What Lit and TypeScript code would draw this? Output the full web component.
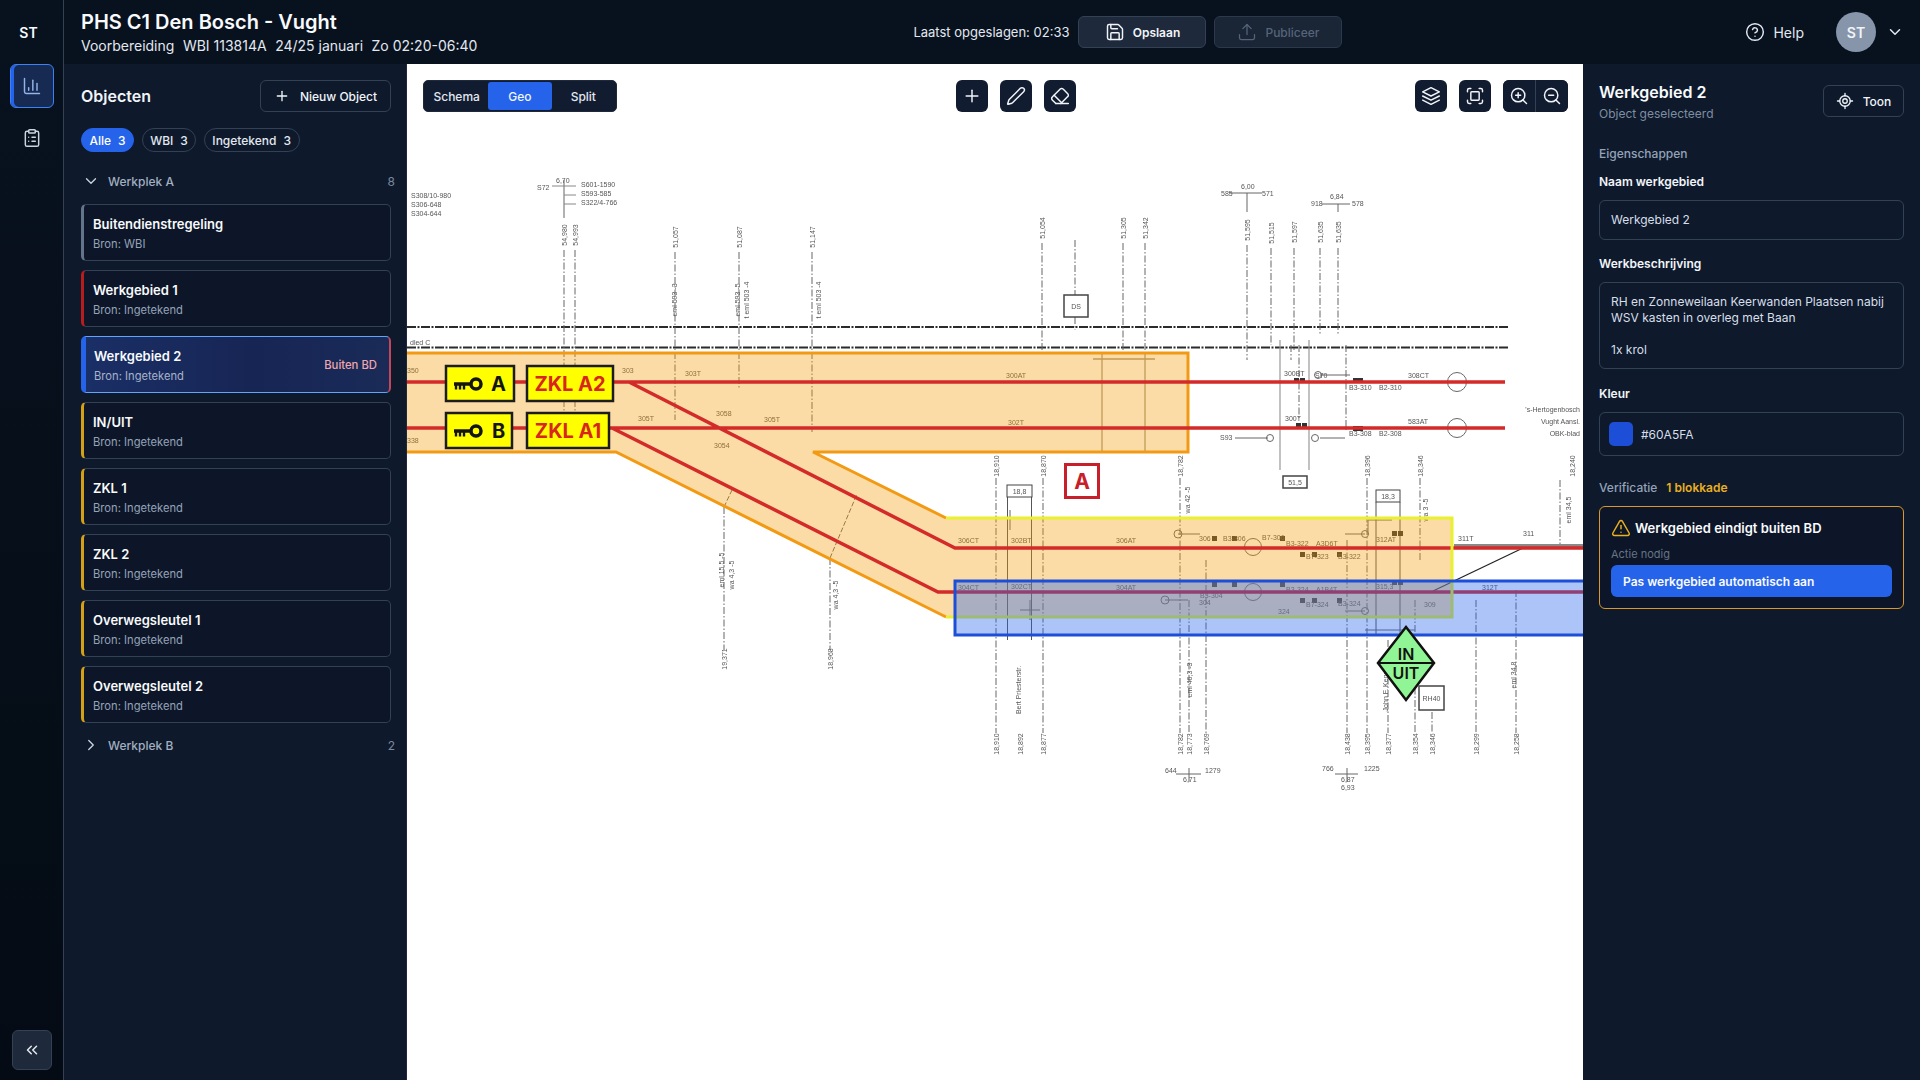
import { LitElement, html, css, svg } from "lit";
import { customElement } from "lit/decorators.js";

const ic = (d: any, size = 16, sw = 2) => html`<svg class="ic" width=${size} height=${size} viewBox="0 0 24 24" fill="none" stroke="currentColor" stroke-width=${sw} stroke-linecap="round" stroke-linejoin="round">${d}</svg>`;

const I = {
  chart: svg`<path d="M3 3v16a2 2 0 0 0 2 2h16"/><path d="M18 17V9"/><path d="M13 17V5"/><path d="M8 17v-3"/>`,
  clip: svg`<rect x="8" y="2" width="8" height="4" rx="1"/><path d="M16 4h2a2 2 0 0 1 2 2v14a2 2 0 0 1-2 2H6a2 2 0 0 1-2-2V6a2 2 0 0 1 2-2h2"/><path d="M12 11h4"/><path d="M12 16h4"/><path d="M8 11h.01"/><path d="M8 16h.01"/>`,
  plus: svg`<path d="M5 12h14"/><path d="M12 5v14"/>`,
  save: svg`<path d="M15.2 3a2 2 0 0 1 1.4.6l3.8 3.8a2 2 0 0 1 .6 1.4V19a2 2 0 0 1-2 2H5a2 2 0 0 1-2-2V5a2 2 0 0 1 2-2z"/><path d="M17 21v-7a1 1 0 0 0-1-1H8a1 1 0 0 0-1 1v7"/><path d="M7 3v4a1 1 0 0 0 1 1h7"/>`,
  upload: svg`<path d="M21 15v4a2 2 0 0 1-2 2H5a2 2 0 0 1-2-2v-4"/><path d="M17 8l-5-5-5 5"/><path d="M12 3v12"/>`,
  help: svg`<circle cx="12" cy="12" r="10"/><path d="M9.09 9a3 3 0 0 1 5.83 1c0 2-3 3-3 3"/><path d="M12 17h.01"/>`,
  down: svg`<path d="m6 9 6 6 6-6"/>`,
  right: svg`<path d="m9 18 6-6-6-6"/>`,
  dbl: svg`<path d="m11 17-5-5 5-5"/><path d="m18 17-5-5 5-5"/>`,
  pencil: svg`<path d="M21.174 6.812a1 1 0 0 0-3.986-3.987L3.842 16.174a2 2 0 0 0-.5.83l-1.321 4.352a.5.5 0 0 0 .623.622l4.353-1.32a2 2 0 0 0 .83-.497z"/>`,
  eraser: svg`<path d="m7 21-4.3-4.3c-1-1-1-2.5 0-3.4l9.6-9.6c1-1 2.5-1 3.4 0l5.6 5.6c1 1 1 2.5 0 3.4L13 21"/><path d="M22 21H7"/><path d="m5 11 9 9"/>`,
  layers: svg`<path d="M12 2 2 7l10 5 10-5-10-5z"/><path d="m2 17 10 5 10-5"/><path d="m2 12 10 5 10-5"/>`,
  scan: svg`<path d="M3 7V5a2 2 0 0 1 2-2h2"/><path d="M17 3h2a2 2 0 0 1 2 2v2"/><path d="M21 17v2a2 2 0 0 1-2 2h-2"/><path d="M7 21H5a2 2 0 0 1-2-2v-2"/><rect x="7" y="7" width="10" height="10" rx="1"/>`,
  zin: svg`<circle cx="11" cy="11" r="8"/><path d="m21 21-4.3-4.3"/><path d="M11 8v6"/><path d="M8 11h6"/>`,
  zout: svg`<circle cx="11" cy="11" r="8"/><path d="m21 21-4.3-4.3"/><path d="M8 11h6"/>`,
  locate: svg`<path d="M2 12h3"/><path d="M19 12h3"/><path d="M12 2v3"/><path d="M12 19v3"/><circle cx="12" cy="12" r="7"/><circle cx="12" cy="12" r="3"/>`,
  warn: svg`<path d="m21.73 18-8-14a2 2 0 0 0-3.48 0l-8 14A2 2 0 0 0 4 21h16a2 2 0 0 0 1.73-3"/><path d="M12 9v4"/><path d="M12 17h.01"/>`,
};

const objects = [
  { t: "Buitendienstregeling", s: "Bron: WBI", c: "#64748b" },
  { t: "Werkgebied 1", s: "Bron: Ingetekend", c: "#b91c1c" },
  { t: "Werkgebied 2", s: "Bron: Ingetekend", c: "#2563eb", sel: true },
  { t: "IN/UIT", s: "Bron: Ingetekend", c: "#d4a017" },
  { t: "ZKL 1", s: "Bron: Ingetekend", c: "#d4a017" },
  { t: "ZKL 2", s: "Bron: Ingetekend", c: "#d4a017" },
  { t: "Overwegsleutel 1", s: "Bron: Ingetekend", c: "#d4a017" },
  { t: "Overwegsleutel 2", s: "Bron: Ingetekend", c: "#d4a017" },
];

/* [x, y1, y2] dash-dot survey lines */
const dashLines: number[][] = [
  [564, 250, 425], [575, 250, 425], [675, 252, 420], [739, 252, 388], [812, 252, 432],
  [1042, 243, 353], [1075, 240, 295], [1075, 317, 330], [1123, 243, 353], [1145, 243, 353], [1247, 245, 360], [1271, 248, 345], [1294, 248, 350], [1320, 248, 335], [1338, 248, 335],
  [996, 478, 733], [1043, 478, 733], [1180, 478, 733], [1189, 600, 733], [1206, 560, 733], [1347, 540, 733],
  [1367, 478, 733], [1388, 640, 733], [1420, 478, 560], [1415, 600, 733], [1432, 712, 733], [1476, 600, 733], [1516, 590, 733],
  [724, 507, 650], [830, 558, 650], [1291, 345, 360], [1299, 345, 420], [1346, 345, 430], [1560, 480, 548],
];
/* [x, y, text] rotated chainage labels */
const vLabels: [number, number, string][] = [
  [564, 235, "54,980"], [575, 235, "54,993"], [675, 237, "51,057"], [739, 237, "51,087"], [812, 237, "51,147"],
  [1042, 228, "51,054"], [1123, 228, "51,305"], [1145, 228, "51,342"], [1247, 230, "51,595"], [1271, 233, "51,515"], [1294, 232, "51,597"], [1320, 232, "51,635"], [1338, 232, "51,635"],
  [996, 466, "18,910"], [1043, 466, "18,870"], [1180, 466, "18,782"], [1367, 466, "18,396"], [1420, 466, "18,346"], [1572, 466, "18,240"],
  [996, 744, "18,910"], [1020, 744, "18,892"], [1043, 744, "18,877"], [1180, 744, "18,782"], [1189, 744, "18,773"], [1206, 744, "18,769"],
  [1347, 744, "18,438"], [1367, 744, "18,395"], [1388, 744, "18,377"], [1415, 744, "18,354"], [1432, 744, "18,346"], [1476, 744, "18,299"], [1516, 744, "18,258"],
  [724, 659, "19,371"], [830, 659, "18,968"],
  [674, 300, "eml 593 -3"], [737, 300, "eml 593 -5"], [746, 300, "t eml 503 -4"], [818, 300, "t eml 503 -4"],
  [721, 570, "eml 15,5 -5"], [731, 575, "wa 4,3 -5"], [835, 595, "wa 4,3 -5"],
  [1187, 500, "wa 42 -5"], [1425, 510, "wa 3 -5"], [1018, 690, "Bert Priesterstr."], [1385, 690, "John F. Kenn."], [1513, 675, "eml 34,8"], [1189, 680, "eml 46,3 -3"], [1568, 510, "eml 34,5"],
];
/* [x, y, text, anchor] flat labels */
const hLabels: [number, number, string, string?][] = [
  [411, 198, "S308/10-980"], [411, 207, "S306-648"], [411, 216, "S304-644"],
  [537, 190, "S72"], [581, 187, "S601-1590"], [581, 196, "S593-585"], [581, 205, "S322/4-766"], [556, 183, "6,70"],
  [1221, 196, "585"], [1241, 189, "6,00"], [1262, 196, "571"], [1311, 206, "918"], [1330, 199, "6,84"], [1352, 206, "578"],
  [410, 345, "dled C"], [407, 373, "350"], [407, 443, "338"], [622, 373, "303"], [685, 376, "303T"], [638, 421, "305T"], [716, 416, "3058"], [764, 422, "305T"], [714, 448, "3054"],
  [1006, 378, "300AT"], [1008, 425, "302T"], [1284, 376, "300BT"], [1285, 421, "300T"], [1408, 378, "308CT"], [1408, 424, "583AT"],
  [1349, 390, "B3-310"], [1379, 390, "B2-310"], [1349, 436, "B3-308"], [1379, 436, "B2-308"], [1220, 440, "S93"], [1315, 378, "S70"],
  [958, 543, "306CT"], [1116, 543, "306AT"], [1011, 543, "302BT"], [958, 590, "304CT"], [1116, 590, "304AT"], [1011, 589, "302CT"],
  [1199, 541, "306"], [1223, 541, "B3-306"], [1262, 540, "B7-306"], [1286, 546, "B3-322"], [1316, 546, "A3D6T"], [1306, 559, "B7-323"], [1338, 559, "B3-322"], [1376, 542, "312AT"], [1458, 541, "311T"], [1523, 536, "311"],
  [1199, 605, "304"], [1200, 598, "B3-304"], [1286, 592, "B3-324"], [1316, 592, "A1B4T"], [1306, 607, "B7-324"], [1338, 606, "B3-324"], [1278, 614, "324"], [1376, 589, "315,3"], [1482, 590, "312T"], [1424, 607, "309"],
  [1165, 773, "644"], [1205, 773, "1279"], [1322, 771, "766"], [1364, 771, "1225"], [1183, 782, "6,71"], [1341, 782, "6,87"], [1341, 790, "6,93"],
  [1580, 412, "'s-Hertogenbosch", "end"], [1580, 424, "Vught Aansl.", "end"], [1580, 436, "OBK-blad", "end"],
];
const boxes: [number, number, number, number, string, number][] = [
  [1064, 295, 24, 22, "DS", 1.5], [1007, 485, 25, 12, "18,8", 1], [1376, 490, 24, 12, "18,3", 1], [1283, 476, 24, 12, "51,5", 1.5], [1419, 686, 25, 24, "RH40", 1.5],
];

@customElement("map-view")
class MapView extends LitElement {
  static styles = css`
    :host { display: block; position: absolute; inset: 0; }
    svg { display: block; width: 100%; height: 100%; font-family: "Liberation Sans", sans-serif; }
    .bp { filter: blur(0.45px); }
    .s { font-size: 7px; fill: #555; }
    .big { font-family: Inter, sans-serif; font-weight: 700; }
    .mid { font-weight: 600; }
  `;
  key(y: number) {
    return svg`<g fill="none" stroke="#141414">
      <circle cx="476" cy=${y} r="5" stroke-width="3.5"/>
      <path d="M454 ${y}H470" stroke-width="3.5"/>
      <path d="M456 ${y}v5.5M460 ${y}v5.5M464 ${y}v5.5" stroke-width="2.4"/></g>`;
  }
  label(x: number, y: number, w: number, t: string, col: string) {
    const h = 35;
    return svg`<rect x=${x} y=${y} width=${w} height=${h} fill="#ffff00" stroke="#1c1c1c" stroke-width="2.5"/>
      <text class="big" x=${t.length > 1 ? x + w / 2 : 498.5} y=${y + h / 2 + 7} text-anchor="middle" font-size="20" fill=${col}>${t}</text>`;
  }
  render() {
    return html`<svg viewBox="407 64 1176 1016" xmlns="http://www.w3.org/2000/svg">
      <rect x="407" y="64" width="1176" height="1016" fill="#fff"/>
      <g class="bp">
        <path d="M407 327H1508" stroke="#2b2b2b" stroke-width="2" stroke-dasharray="9 1.5 2 1.5" fill="none"/>
        <path d="M407 347.5H1508" stroke="#2b2b2b" stroke-width="2" stroke-dasharray="9 1.5 2 1.5" fill="none"/>
        <g stroke="#666" stroke-width="1" fill="none">
          ${dashLines.map(([x, a, b]) => svg`<path d="M${x} ${a}V${b}" stroke-dasharray="7 2 1.5 2"/>`)}
          <path d="M564 180V218" stroke="#999" stroke-width="1.5"/>
          <path d="M552 186H576M564 195H576M564 204H576" stroke="#888"/>
          <path d="M1229 193H1262M1247 193V212" stroke="#666"/>
          <path d="M1322 204H1350M1338 204V212" stroke="#666"/>
          <path d="M1102 353V452M1145 353V452" stroke="#8a7a5a"/>
          <path d="M1093 359H1155" stroke="#a8957a" stroke-width="1.5"/>
          <path d="M1007.5 497V640M1031.5 497V640M1376 502V635M1400 502V640" stroke="#555"/>
          <path d="M1280 340V470M1309 340V470" stroke="#999" stroke-width="1.2"/>
          <path d="M724 507L732 490M830 558L857 494" stroke-dasharray="5 2"/>
          <path d="M1189 768V782M1176 774H1201M1347 768V782M1335 774H1358"/>
          <path d="M1523 548L1433 591" stroke="#222" stroke-width="1.2"/>
          <path d="M1454 545.5H1583" stroke="#8a8a8a" stroke-width="3"/>
          <circle cx="1457" cy="382" r="9.5"/><circle cx="1457" cy="428" r="9.5"/><circle cx="1253" cy="547" r="8.5"/><circle cx="1253" cy="592" r="8.5"/>
          <circle cx="1178" cy="534" r="4"/><circle cx="1165" cy="600" r="4"/><circle cx="1315" cy="438" r="3.5"/><circle cx="1318" cy="375" r="3.5"/><circle cx="1365" cy="534" r="3.5"/><circle cx="1365" cy="611" r="3.5"/><circle cx="1270" cy="438" r="3.5"/>
          <path d="M1178 534H1200M1165 600H1188M1320 375H1350M1320 438H1345M1235 438H1268M1345 534H1365M1345 611H1365" />
          <path d="M1368 520H1392M1368 520V535M1000 518H1020M1010 510V530M1040 610H1020M1030 600V620M1365 630H1415M1398 636V650"/>
        </g>
        <g fill="#333">
          ${[[1294,378],[1300,378],[1296,423],[1302,423],[1353,378],[1358,378],[1353,426],[1358,426],[1392,531],[1398,531],[1212,536],[1232,536],[1280,536],[1300,552],[1312,552],[1337,552],[1212,582],[1232,582],[1280,582],[1300,598],[1312,598],[1337,598],[1392,580],[1398,580]].map(([x, y]) => svg`<rect x=${x} y=${y} width="5" height="5"/>`)}
        </g>
        ${vLabels.map(([x, y, t]) => svg`<text class="s" transform="translate(${x + 2.5} ${y}) rotate(-90)" text-anchor="middle">${t}</text>`)}
        ${hLabels.map(([x, y, t, a]) => svg`<text class="s" x=${x} y=${y} text-anchor=${a || "start"}>${t}</text>`)}
        ${boxes.map(([x, y, w, h, t, sw]) => svg`<rect x=${x} y=${y} width=${w} height=${h} fill="#fff" stroke="#444" stroke-width=${sw}/><text class="s" x=${x + w / 2} y=${y + h / 2 + 2.5} text-anchor="middle">${t}</text>`)}
      </g>

      <path d="M407 353H1188V452H813L946 518V617L616 452H407Z" fill="#f59e0b" fill-opacity=".36"/>
      <path d="M1452 518H946V617H1452Z" fill="#f59e0b" fill-opacity=".36"/>
      <path d="M407 353H1188V452H813L946 518M946 617L616 452H407" fill="none" stroke="#f29a14" stroke-width="3"/>
      <path d="M407 382H1505M407 428H1505M629 382L955 548H1583M612 428L938 592H1583" fill="none" stroke="#d32a2a" stroke-width="3.5"/>
      <path d="M946 518H1452V617H946" fill="none" stroke="#e9f02e" stroke-width="3"/>
      <rect x="955" y="581" width="630" height="54" fill="#2563eb" fill-opacity=".38" stroke="#1d4ed8" stroke-width="3"/>

      ${this.label(446, 366, 68, "A", "#141414")}${this.key(384)}
      ${this.label(446, 413, 66, "B", "#141414")}${this.key(431)}
      ${this.label(527, 366, 86, "ZKL A2", "#d7261e")}
      ${this.label(527, 413, 82, "ZKL A1", "#d7261e")}

      <rect x="1065.5" y="464.5" width="33" height="33" fill="#fff" stroke="#c8202a" stroke-width="3"/>
      <text class="big" x="1082" y="489" text-anchor="middle" font-size="21" fill="#c8202a">A</text>

      <path d="M1406 627L1434 663L1406 700L1378 663Z" fill="#90f594" stroke="#111" stroke-width="2.5"/>
      <path d="M1378 663H1434" stroke="#111" stroke-width="2"/>
      <text class="big mid" x="1406" y="660" text-anchor="middle" font-size="16" fill="#111">IN</text>
      <text class="big mid" x="1406" y="679" text-anchor="middle" font-size="16" fill="#111">UIT</text>
    </svg>`;
  }
}

@customElement("app-root")
export class AppRoot extends LitElement {
  static styles = css`
    :host { display: block; width: 1920px; height: 1080px; overflow: hidden; font-family: Inter, "Noto Sans", sans-serif; color: #f1f5f9; background: #07101c; }
    * { box-sizing: border-box; }
    .ic { display: block; flex: none; }
    .app { display: flex; height: 1080px; }

    .rail { width: 64px; flex: none; display: flex; flex-direction: column; align-items: center; border-right: 1px solid #334155; background: linear-gradient(#08121f, #040b14); }
    .logo { height: 64px; display: flex; align-items: center; padding-right: 6px; font-size: 14px; font-weight: 600; color: #f8fafc; }
    .rail-btn { width: 44px; height: 44px; margin-left: 1px; display: flex; align-items: center; justify-content: center; border-radius: 6px; color: #cbd5e1; }
    .rail-btn.on { border: 1px solid #3b82f6; background: #172a52; color: #93b4ea; box-shadow: inset 3px 0 0 #2563eb; }
    .rail-btn + .rail-btn { margin-top: 8px; }
    .collapse { margin: auto 0 10px 1px; width: 40px; height: 40px; border: 1px solid #334155; background: #1e293b; border-radius: 6px; display: flex; align-items: center; justify-content: center; color: #e2e8f0; }

    .main { flex: 1; display: flex; flex-direction: column; min-width: 0; }
    .top { height: 64px; flex: none; display: flex; align-items: center; padding: 0 16px 0 17px; background: #08111e; }
    .title h1 { margin: 0; font-size: 20px; line-height: 28px; font-weight: 600; color: #f8fafc; }
    .title p { margin: 0; display: flex; gap: 8.5px; font-size: 14px; line-height: 20px; color: #e2e8f0; }
    .saved { margin-left: auto; font-size: 13px; color: #e2e8f0; margin-right: 9px; }
    .tbtn { height: 32px; display: flex; align-items: center; justify-content: center; gap: 8px; border: 1px solid #334155; background: #1e293b; border-radius: 6px; font-size: 12px; font-weight: 600; color: #f1f5f9; }
    .tbtn.save { width: 128px; }
    .tbtn.pub { width: 128px; margin-left: 8px; background: #1a2535; color: #56647a; border-color: #2c394c; font-weight: 500; }
    .help { margin-left: 403px; display: flex; align-items: center; gap: 8px; font-size: 14px; color: #e2e8f0; }
    .avatar { margin-left: 32px; width: 40px; height: 40px; border-radius: 50%; background: #8795aa; display: flex; align-items: center; justify-content: center; font-size: 14px; font-weight: 600; color: #f1f5f9; }
    .chev { margin-left: 10px; color: #e2e8f0; }

    .body { flex: 1; display: flex; min-height: 0; }
    .side { width: 343px; flex: none; padding: 16px 15px 0 17px; background: #0e1a2c; border-right: 1px solid #1e293b; }
    .side-head { display: flex; justify-content: space-between; align-items: center; height: 32px; }
    .side-head h2 { margin: 0; font-size: 16px; font-weight: 600; color: #f1f5f9; }
    .new { width: 131px; height: 32px; display: flex; align-items: center; justify-content: center; gap: 10px; border: 1px solid #334155; border-radius: 6px; font-size: 12px; font-weight: 500; color: #f1f5f9; }
    .chips { display: flex; gap: 7.5px; margin-top: 16px; }
    .chip { height: 24px; padding: 0 7.5px; display: flex; gap: 7px; align-items: center; border: 1px solid #334155; border-radius: 12px; font-size: 12px; font-weight: 500; color: #e2e8f0; }
    .chip.on { background: #2563eb; border-color: #2563eb; color: #fff; }
    .group { display: flex; align-items: center; height: 24px; margin-right: -4px; font-size: 12px; font-weight: 500; color: #a3afc0; }
    .group .ic { margin: 0 8px 0 1px; color: #cbd5e1; }
    .group .n { margin-left: auto; font-weight: 400; color: #7c899c; }
    .group.a { margin-top: 17px; margin-bottom: 11px; }
    .group.b { margin-top: 10px; }
    .cards { display: flex; flex-direction: column; gap: 9px; }
    .card { height: 57px; display: flex; align-items: center; justify-content: space-between; padding: 0 11px 0 9px; border: 1px solid #334155; border-left: 3px solid; border-radius: 5px; background: #0d1628; }
    .card b { display: block; font-size: 13px; line-height: 18px; font-weight: 600; color: #f8fafc; }
    .card span { display: block; margin-top: 4px; font-size: 11.2px; line-height: 14px; color: #94a3b8; }
    .card.sel { border-color: #60a5fa; border-left: 5px solid #2563eb; border-right: 2px solid #c2475a; background: linear-gradient(90deg, #1a2f66, #172554 55%, #1a2b58); padding: 0 12px 0 8px; }
    .card.sel span { color: #a6b3c8; }
    .card .flag { margin: 0; font-size: 11.3px; font-weight: 500; color: #f0a6b0; }

    .canvas { flex: 1; position: relative; background: #fff; min-width: 0; }
    .tools { position: absolute; top: 16px; left: 16px; right: 15px; height: 32px; display: flex; }
    .seg { display: flex; width: 194px; height: 32px; padding: 1px; background: #121c30; border-radius: 5px; border: 1px solid #1e293b; }
    .seg div { flex: 1; display: flex; align-items: center; justify-content: center; font-size: 12px; font-weight: 500; color: #e2e8f0; border-radius: 3px; }
    .seg div.on { background: #2563eb; color: #eff6ff; }
    .tb { width: 32px; height: 32px; display: flex; align-items: center; justify-content: center; background: #121c30; border-radius: 6px; color: #f1f5f9; }
    .gap12 { display: flex; gap: 12px; }
    .mid { position: absolute; left: 533px; }
    .rgt { position: absolute; right: 0; }
    .zoomg { display: flex; width: 65px; background: #121c30; border-radius: 6px; }
    .zoomg .tb:first-child { border-right: 1px solid #334155; border-radius: 6px 0 0 6px; width: 33px; }

    .panel { width: 337px; flex: none; padding: 16px 16px 0; background: #0e1a2c; }
    .p-head { display: flex; justify-content: space-between; }
    .p-head h2 { margin: 0; font-size: 16px; line-height: 24px; font-weight: 600; color: #f8fafc; }
    .p-head p { margin: 2px 0 0; font-size: 12px; line-height: 16px; color: #7f8da1; }
    .toon { margin-top: 5px; width: 81px; height: 32px; display: flex; align-items: center; justify-content: center; gap: 9px; border: 1px solid #334155; border-radius: 6px; font-size: 12px; font-weight: 500; color: #f1f5f9; }
    .sec { margin-top: 24px; font-size: 12px; line-height: 16px; font-weight: 500; color: #94a3b8; }
    .lbl { font-size: 12px; line-height: 16px; font-weight: 600; color: #f1f5f9; }
    .sec + .lbl { margin-top: 12px; }
    .field { margin-top: 10px; border: 1px solid #334155; border-radius: 6px; padding: 0 11px; display: flex; align-items: center; font-size: 12px; color: #d7dee8; }
    .field + .lbl { margin-top: 16px; }
    .f1 { height: 40px; padding-bottom: 1px; }
    .f2 { height: 87px; display: block; padding-top: 11px; line-height: 16px; }
    .f2 p { margin: 0; }
    .f2 p + p { margin-top: 16px; }
    .f3 { height: 44px; gap: 8px; padding: 0 9px; }
    .field + .lbl.kleur { margin-top: 17px; }
    .swatch { width: 24px; height: 24px; border-radius: 5px; background: #1d4ed8; }
    .ver { display: flex; gap: 9px; margin-top: 24px; font-size: 12px; line-height: 16px; font-weight: 500; color: #94a3b8; }
    .ver b { font-weight: 600; color: #eab01f; }
    .vcard { margin-top: 10px; height: 103px; padding: 11px; border: 1px solid #d9982a; border-radius: 6px; background: #0d1628; }
    .vrow { display: flex; align-items: center; gap: 4px; height: 20px; font-size: 13px; font-weight: 600; color: #f8fafc; }
    .vrow .ic { color: #eab01f; }
    .vsub { margin-top: 8px; font-size: 11px; line-height: 16px; color: #667487; }
    .fix { margin-top: 3px; height: 32px; display: flex; align-items: center; padding-left: 12px; border-radius: 6px; background: #2563eb; font-size: 12px; font-weight: 600; color: #f8fafc; }
  `;

  render() {
    return html`<div class="app">
      <nav class="rail">
        <div class="logo">ST</div>
        <div class="rail-btn on">${ic(I.chart, 20, 1.75)}</div>
        <div class="rail-btn">${ic(I.clip, 20, 1.75)}</div>
        <div class="collapse">${ic(I.dbl, 18)}</div>
      </nav>
      <div class="main">
        <header class="top">
          <div class="title">
            <h1>PHS C1 Den Bosch - Vught</h1>
            <p><span>Voorbereiding</span><span>WBI 113814A</span><span>24/25 januari</span><span>Zo 02:20-06:40</span></p>
          </div>
          <div class="saved">Laatst opgeslagen: 02:33</div>
          <div class="tbtn save">${ic(I.save, 20, 1.75)}Opslaan</div>
          <div class="tbtn pub">${ic(I.upload, 20, 1.5)}Publiceer</div>
          <div class="help">${ic(I.help, 20, 1.75)}Help</div>
          <div class="avatar">ST</div>
          <div class="chev">${ic(I.down, 18)}</div>
        </header>
        <div class="body">
          <aside class="side">
            <div class="side-head"><h2>Objecten</h2><div class="new">${ic(I.plus, 16)}Nieuw Object</div></div>
            <div class="chips">
              <div class="chip on"><span>Alle</span><span>3</span></div>
              <div class="chip"><span>WBI</span><span>3</span></div>
              <div class="chip"><span>Ingetekend</span><span>3</span></div>
            </div>
            <div class="group a">${ic(I.down, 18, 1.75)}<span>Werkplek A</span><span class="n">8</span></div>
            <div class="cards">
              ${objects.map((o) => html`<div class="card ${o.sel ? "sel" : ""}" style="border-left-color:${o.c}">
                <div><b>${o.t}</b><span>${o.s}</span></div>
                ${o.sel ? html`<div class="flag">Buiten BD</div>` : ""}
              </div>`)}
            </div>
            <div class="group b">${ic(I.right, 18, 1.75)}<span>Werkplek B</span><span class="n">2</span></div>
          </aside>
          <main class="canvas">
            <map-view></map-view>
            <div class="tools">
              <div class="seg"><div>Schema</div><div class="on">Geo</div><div>Split</div></div>
              <div class="mid gap12">
                <div class="tb">${ic(I.plus, 20, 1.75)}</div>
                <div class="tb">${ic(I.pencil, 20, 1.75)}</div>
                <div class="tb">${ic(I.eraser, 20, 1.75)}</div>
              </div>
              <div class="rgt gap12">
                <div class="tb">${ic(I.layers, 20, 1.75)}</div>
                <div class="tb">${ic(I.scan, 20, 1.75)}</div>
                <div class="zoomg">
                  <div class="tb">${ic(I.zin, 20, 1.75)}</div>
                  <div class="tb">${ic(I.zout, 20, 1.75)}</div>
                </div>
              </div>
            </div>
          </main>
          <aside class="panel">
            <div class="p-head">
              <div><h2>Werkgebied 2</h2><p>Object geselecteerd</p></div>
              <div class="toon">${ic(I.locate, 18, 1.75)}Toon</div>
            </div>
            <div class="sec">Eigenschappen</div>
            <div class="lbl">Naam werkgebied</div>
            <div class="field f1">Werkgebied 2</div>
            <div class="lbl">Werkbeschrijving</div>
            <div class="field f2"><p>RH en Zonneweilaan Keerwanden Plaatsen nabij<br />WSV kasten in overleg met Baan</p><p>1x krol</p></div>
            <div class="lbl kleur">Kleur</div>
            <div class="field f3"><div class="swatch"></div>#60A5FA</div>
            <div class="ver"><span>Verificatie</span><b>1 blokkade</b></div>
            <div class="vcard">
              <div class="vrow">${ic(I.warn, 20, 1.75)}Werkgebied eindigt buiten BD</div>
              <div class="vsub">Actie nodig</div>
              <div class="fix">Pas werkgebied automatisch aan</div>
            </div>
          </aside>
        </div>
      </div>
    </div>`;
  }
}
